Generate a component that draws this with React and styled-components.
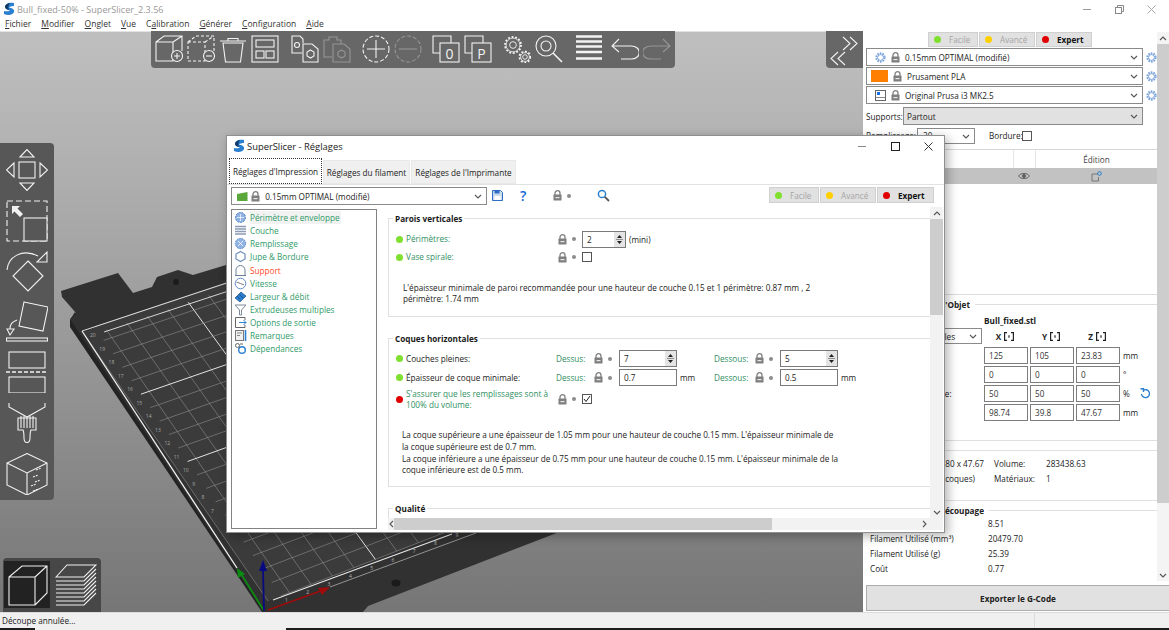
import React from 'react';
import styled, { createGlobalStyle } from 'styled-components';

const GlobalStyle = createGlobalStyle`
  html, body {
    margin: 0;
    padding: 0;
    background: #fff;
    font-family: "Open Sans", "Noto Sans", sans-serif;
    font-size: 8.2px;
    color: #222;
  }
  * { box-sizing: border-box; }
`;

const AppWindow = styled.div`
  position: relative;
  width: 1169px;
  height: 630px;
  display: flex;
  flex-direction: column;
  overflow: hidden;
  background: #fff;
`;

const TitleBar = styled.div`
  height: 16px;
  display: flex;
  align-items: center;
  padding: 2px 0 0 3px;
  gap: 1px;
  color: #999;
  font-size: 9.1px;
`;

const WinButtons = styled.div`
  margin-left: auto;
  margin-right: 13px;
  display: flex;
  align-items: center;
  gap: 23px;
`;

const MenuBar = styled.div`
  height: 15px;
  display: flex;
  align-items: center;
  gap: 10px;
  padding-left: 5px;
  font-size: 8.5px;
  color: #333;
`;

const Body = styled.div`
  flex: 1;
  display: flex;
  min-height: 0;
`;

const Canvas = styled.div`
  position: relative;
  flex: 1;
  background: linear-gradient(#bfbfbf, #b2b2b2 20%, #767676);
  border-top: 1px solid #e2e2e2;
`;

const BedSvg = styled.svg`
  position: absolute;
  left: 0;
  top: -1px;
`;

const TopTools = styled.div`
  position: absolute;
  left: 151px;
  top: -1px;
  width: 524px;
  height: 37px;
  padding: 4px 0 0 4px;
  display: flex;
  gap: 4px;
  background: #676767;
  border-radius: 0 0 4px 4px;
`;

const CollapseBox = styled.div`
  position: absolute;
  right: 0;
  top: -1px;
  width: 37px;
  height: 37px;
  background: #676767;
  border-radius: 0 0 0 4px;
`;

const LeftTools = styled.div`
  position: absolute;
  left: 0;
  top: 111px;
  width: 54px;
  height: 357px;
  padding: 6px 0 0 6px;
  display: flex;
  flex-direction: column;
  gap: 8.6px;
  background: #575757;
  border-radius: 0 4px 4px 0;
`;

const ViewPanel = styled.div`
  position: absolute;
  left: 3px;
  bottom: 0;
  width: 98px;
  height: 54px;
  padding: 3px 0 0 1px;
  display: flex;
  gap: 3px;
  background: #474747;
  border-radius: 4px 4px 0 0;
`;

const ViewCell = styled.div`
  width: 46px;
  height: 47px;
  display: flex;
  align-items: center;
  justify-content: center;
  background: ${(p) => (p.$active ? '#222' : 'transparent')};
`;

const Tool = styled.svg`
  flex: none;
  fill: none;
  stroke: #fff;
  stroke-width: 1.1;
  opacity: ${(p) => (p.$off ? 0.3 : 0.92)};
  margin-left: ${(p) => p.$sep || 0}px;
`;

/* right panel */
const Sidebar = styled.div`
  width: 306px;
  display: flex;
  flex-direction: column;
  background: #fff;
`;

const SideMain = styled.div`
  flex: 1;
  display: flex;
  min-height: 0;
`;

const SideContent = styled.div`
  flex: 1;
  min-width: 0;
  display: flex;
  flex-direction: column;
  & > * {
    flex: none;
  }
`;

const SideModes = styled.div`
  display: flex;
  gap: 1px;
  padding: 1px 0 0 65px;
  height: 17px;
`;

const ModeBtn = styled.div`
  width: ${(p) => p.$w}px;
  height: ${(p) => p.$h || 15}px;
  display: flex;
  align-items: center;
  gap: 8px;
  padding-left: 5px;
  background: #e1e1e1;
  border: 1px solid #d0d0d0;
  color: ${(p) => (p.$active ? '#111' : '#a5a5a5')};
  font-weight: ${(p) => (p.$active ? 700 : 400)};
`;

const Dot = styled.span`
  flex: none;
  width: 7px;
  height: 7px;
  border-radius: 50%;
  background: ${(p) => p.$color};
`;

const PresetList = styled.div`
  display: flex;
  flex-direction: column;
  gap: 1px;
  padding-left: 3px;
`;

const PresetRow = styled.div`
  display: flex;
  align-items: center;
  gap: 3px;
`;

const Combo = styled.div`
  position: relative;
  width: ${(p) => p.$w}px;
  height: ${(p) => p.$h || 18}px;
  flex: none;
  display: flex;
  align-items: center;
  gap: ${(p) => p.$gap || 5}px;
  padding-left: ${(p) => p.$pad || 8}px;
  margin-left: ${(p) => p.$left || 0}px;
  background: ${(p) => p.$bg || '#fff'};
  border: 1px solid #8a8a8a;
  overflow: hidden;
  white-space: nowrap;
`;

const ChevronBox = styled.span`
  position: absolute;
  right: 4px;
  top: 50%;
  margin-top: -2px;
  display: flex;
`;

const OptionsRow = styled.div`
  display: flex;
  align-items: center;
  height: ${(p) => p.$h}px;
  margin-top: ${(p) => p.$top || 0}px;
  padding-left: 3px;
`;

const OptLabel = styled.span`
  width: ${(p) => p.$w}px;
  margin-left: ${(p) => p.$left || 0}px;
  flex: none;
  white-space: nowrap;
`;

const Swatch = styled.span`
  width: 17px;
  height: 12px;
  margin-left: -4px;
  background: #ff8000;
`;

const CheckBox = styled.span`
  display: flex;
  align-items: center;
  justify-content: center;
  flex: none;
  width: 10px;
  height: 10px;
  border: 1px solid #555;
  background: #fff;
`;

const ObjectList = styled.div`
  height: 146px;
  margin-top: 5px;
  border-top: 1px solid #d8d8d8;
  border-bottom: 1px solid #dcdcdc;
`;

const ListHead = styled.div`
  display: grid;
  grid-template-columns: 150px 22px 1fr;
  height: 18px;
  color: #444;
`;

const HeadCell = styled.div`
  display: flex;
  align-items: center;
  justify-content: ${(p) => (p.$start ? 'flex-start' : 'center')};
  padding-left: ${(p) => (p.$start ? 4 : 0)}px;
  border-left: ${(p) => (p.$line ? '1px solid #e6e6e6' : 'none')};
`;

const ListRow = styled(ListHead)`
  height: 16px;
  background: #c2c2c2;
`;

const LegendLine = styled.div`
  display: flex;
  align-items: center;
  gap: 5px;
  height: ${(p) => p.$h}px;
  font-weight: 700;
  white-space: nowrap;
  &::after {
    content: '';
    flex: 1;
    height: 1px;
    background: #dfdfdf;
  }
`;

const LegendText = styled.span`
  width: ${(p) => p.$w}px;
  flex: none;
  display: flex;
  justify-content: flex-end;
  overflow: hidden;
`;

const ObjectGrid = styled.div`
  display: grid;
  grid-template-columns: 119px 44px 44px 44px 33px;
  grid-template-rows: 12px repeat(5, 17px);
  column-gap: 2px;
  row-gap: 2px;
`;

const FileName = styled.div`
  grid-column: 2 / 5;
  font-weight: 700;
  display: flex;
  align-items: center;
`;

const AxisHead = styled.div`
  display: flex;
  align-items: center;
  justify-content: center;
  gap: 3px;
  padding-right: 2px;
  font-weight: 700;
`;

const NumBox = styled.div`
  border: 1px solid #7d7d7d;
  display: flex;
  align-items: center;
  padding-left: 4px;
  color: #333;
`;

const GridLabel = styled.div`
  display: flex;
  align-items: center;
  padding-left: 22px;
  white-space: nowrap;
`;

const UnitCell = styled.div`
  position: relative;
  display: flex;
  align-items: center;
  padding-left: 1px;
`;

const ResetIcon = styled.svg`
  position: absolute;
  left: 18px;
  top: 3px;
`;

const Rule = styled.div`
  height: 1px;
  margin-top: ${(p) => p.$top}px;
  background: #e0e0e0;
`;

const InfoGrid = styled.div`
  display: grid;
  grid-template-columns: 131px 52px 1fr;
  grid-auto-rows: 15px;
  margin-top: 5px;
  align-items: center;
`;

const InfoLeft = styled.div`
  white-space: nowrap;
  overflow: hidden;
  display: flex;
  justify-content: flex-end;
  padding-right: ${(p) => p.$right}px;
`;

const SliceGrid = styled.div`
  display: grid;
  grid-template-columns: 118px 1fr;
  grid-auto-rows: 15px;
  padding-left: 7px;
  margin-top: -3px;
  align-items: center;
`;

const SideScroll = styled.div`
  width: 12px;
  margin: 1px 0 4px;
  display: flex;
  flex-direction: column;
  background: #f4f4f4;
`;

const ScrollCap = styled.div`
  flex: none;
  display: flex;
  align-items: center;
  justify-content: center;
  height: ${(p) => p.$size || 12}px;
  width: ${(p) => p.$wide || 'auto'};
`;

const ScrollThumb = styled.div`
  flex: none;
  height: ${(p) => p.$h}px;
  background: #cdcdcd;
`;

const ExportBtn = styled.div`
  height: 26px;
  margin: 0 0 1px 3px;
  display: flex;
  align-items: center;
  justify-content: center;
  font-weight: 700;
  background: #e1e1e1;
  border: 1px solid #adadad;
  border-right: none;
`;

const StatusBar = styled.div`
  height: 18px;
  position: relative;
  display: flex;
  align-items: center;
  padding: 0 0 2px 2px;
  background: #f0f0f0;
  border-top: 1px solid #dcdcdc;
`;

const TaskEdge = styled.div`
  position: absolute;
  bottom: 0;
  left: ${(p) => p.$left}px;
  right: ${(p) => p.$right}px;
  height: 2px;
  background: #1c1c1c;
`;

const StatusDivider = styled.div`
  position: absolute;
  left: 1034px;
  top: 0;
  bottom: 2px;
  width: 1px;
  background: #dcdcdc;
`;

/* settings dialog */
const Dialog = styled.div`
  position: absolute;
  left: 226px;
  top: 135px;
  width: 719px;
  height: 398px;
  display: flex;
  flex-direction: column;
  background: #fff;
  border: 1px solid #8f8f8f;
  box-shadow: 3px 3px 10px rgba(0, 0, 0, 0.3);
`;

const DialogTitle = styled.div`
  height: 21px;
  flex: none;
  display: flex;
  align-items: center;
  gap: 1px;
  padding: 0 0 1px 6px;
  font-size: 9.4px;
`;

const DialogWin = styled.div`
  margin-left: auto;
  margin-right: 11px;
  display: flex;
  align-items: center;
  gap: 24px;
`;

const TabRow = styled.div`
  height: 27px;
  flex: none;
  display: flex;
  align-items: flex-end;
  gap: 1px;
  padding-left: 2px;
`;

const Tab = styled.div`
  width: ${(p) => p.$w}px;
  height: ${(p) => (p.$active ? 26 : 24)}px;
  display: flex;
  align-items: center;
  justify-content: center;
  white-space: nowrap;
  background: ${(p) => (p.$active ? '#fff' : '#f0f0f0')};
  border: ${(p) => (p.$active ? '1px dotted #333' : '1px solid #e8e8e8')};
`;

const TabPanel = styled.div`
  flex: 1;
  min-height: 0;
  display: flex;
  flex-direction: column;
  padding-left: 4px;
  border-top: 1px solid #e2e2e2;
`;

const PresetBar = styled.div`
  height: 22px;
  flex: none;
  display: flex;
  align-items: flex-start;
  padding-top: 2px;
`;

const BarItem = styled.span`
  display: flex;
  align-items: center;
  height: 17px;
  margin-left: ${(p) => p.$left}px;
`;

const HelpMark = styled.span`
  color: #1565d8;
  font-size: 14px;
  font-weight: 600;
  line-height: 17px;
`;

const BarModes = styled.div`
  display: flex;
  gap: 1px;
  margin-left: auto;
  margin-right: 10px;
`;

const Split = styled.div`
  flex: 1;
  min-height: 0;
  display: flex;
  gap: 11px;
`;

const Tree = styled.div`
  width: 146px;
  height: 320px;
  margin-top: 2px;
  flex: none;
  padding: 1px 0 0 2px;
  border: 1px solid #828282;
`;

const TreeRow = styled.div`
  display: flex;
  align-items: center;
  gap: 3px;
  height: 13.15px;
  white-space: nowrap;
  color: ${(p) => (p.$red ? '#ff4b1f' : '#2f9a68')};
`;

const TreeIcon = styled.svg`
  flex: none;
`;

const TreeText = styled.span`
  height: 13px;
  line-height: 13px;
  padding-right: 1px;
  background: ${(p) => (p.$active ? '#f2f2f2' : 'transparent')};
`;

const Page = styled.div`
  width: 555px;
  display: grid;
  grid-template-columns: 542px 13px;
  grid-template-rows: 311px 12px;
`;

const PageScroll = styled.div`
  overflow: hidden;
  padding-top: 4px;
`;

const Section = styled.fieldset`
  margin: 0 0 14px;
  padding: 0;
  height: ${(p) => p.$h}px;
  min-width: 0;
  border: 1px solid #e0e0e0;
  border-right: none;
`;

const SectionTitle = styled.legend`
  margin-left: 4px;
  padding: 2px 2px 0;
  font-weight: 700;
  line-height: 12px;
  color: #1a1a1a;
`;

const FormRow = styled.div`
  display: flex;
  align-items: center;
  height: ${(p) => p.$h || 18}px;
  margin-top: ${(p) => p.$top || 0}px;
  padding-left: 7px;
`;

const RowLabel = styled.span`
  flex: none;
  width: ${(p) => p.$w || 155}px;
  padding-left: 3px;
  line-height: 11.5px;
  color: ${(p) => (p.$green ? '#2f8f5f' : '#222')};
`;

const SideTag = styled.span`
  flex: none;
  width: ${(p) => p.$w}px;
  color: #2f8f5f;
`;

const LockGroup = styled.span`
  flex: none;
  width: ${(p) => p.$w || 24}px;
  display: flex;
  align-items: center;
  gap: 5px;
`;

const Bullet = styled.span`
  width: 4px;
  height: 4px;
  border-radius: 50%;
  background: #8c8c8c;
`;

const TextBox = styled.div`
  position: relative;
  flex: none;
  width: ${(p) => p.$w}px;
  height: 17px;
  display: flex;
  align-items: center;
  padding-left: 4px;
  background: #fff;
  border: 1px solid #7a7a7a;
`;

const Spinner = styled.span`
  position: absolute;
  right: 0;
  top: 0;
  bottom: 0;
  width: 11px;
  background: #e4e4e4;
  display: flex;
  align-items: center;
  justify-content: center;
`;

const Unit = styled.span`
  flex: none;
  width: ${(p) => p.$w}px;
  padding-left: 3px;
`;

const NoteText = styled.div`
  margin-top: ${(p) => p.$top}px;
  padding-left: ${(p) => p.$left}px;
  width: ${(p) => p.$width}px;
  line-height: ${(p) => p.$lh}px;
  color: #222;
`;

const VBar = styled.div`
  display: flex;
  flex-direction: column;
  background: #f2f2f2;
`;

const HBar = styled.div`
  display: flex;
  align-items: stretch;
  background: #f2f2f2;
`;

const HThumb = styled.div`
  width: ${(p) => p.$w}px;
  background: #cdcdcd;
`;

const BarGap = styled.div`
  flex: 1;
`;

const Corner = styled.div`
  background: #f2f2f2;
`;

const Chevron = ({ dir = 'down', color = '#555' }) => {
  const paths = {
    down: 'M1 1 L4 4 L7 1',
    up: 'M1 4 L4 1 L7 4',
    left: 'M5 1 L2 4 L5 7',
    right: 'M2 1 L5 4 L2 7',
  };
  const wide = dir === 'down' || dir === 'up';
  return (
    <svg width={wide ? 8 : 7} height={wide ? 5 : 8} fill="none" stroke={color} strokeWidth="1.1">
      <path d={paths[dir]} />
    </svg>
  );
};

const Lock = () => (
  <svg width="9" height="11" viewBox="0 0 9 11">
    <path d="M2 5V3.2a2.5 2.5 0 0 1 5 0V5" fill="none" stroke="#7f7f7f" strokeWidth="1.3" />
    <rect x="0.5" y="4.6" width="8" height="6" rx="0.6" fill="#7f7f7f" />
    <rect x="2.5" y="7" width="4" height="1.2" fill="#e8e8e8" />
  </svg>
);

const BlueGear = ({ size = 11 }) => (
  <svg width={size} height={size} viewBox="0 0 12 12" fill="none">
    <circle cx="6" cy="6" r="4.6" stroke="#7aa3dc" strokeWidth="2" strokeDasharray="1.8 1.1" />
    <circle cx="6" cy="6" r="3.2" stroke="#6f97d2" strokeWidth="1" />
    <circle cx="6" cy="6" r="2" fill="#fff" />
  </svg>
);

const Logo = () => (
  <svg width="13" height="14" viewBox="0 0 13 14">
    <path d="M11 1 C6 0 2 2 2 5 C2 7 5 8 7 8.5 C5 9.5 3 9.5 1 9 L1 12 C5 14 10 13 11 10 C12 7 8 6 6 5.5 C7 4.5 9 4 11 4 Z" fill="#2a7fd0" />
    <path d="M7 1 C4 1.5 2 3 2 5 C2 6.5 4 7.5 6 8 C5 6 5 3 7 1 Z" fill="#123a63" />
  </svg>
);

const WinMin = ({ color = '#888' }) => (
  <svg width="9" height="9" stroke={color} fill="none"><path d="M0 4.5H8" /></svg>
);
const WinMax = ({ color = '#222' }) => (
  <svg width="9" height="9" stroke={color} fill="none"><rect x="0.5" y="0.5" width="8" height="8" /></svg>
);
const WinRestore = () => (
  <svg width="9" height="9" stroke="#888" fill="none">
    <rect x="0.5" y="2.5" width="6" height="6" />
    <path d="M2.5 2.5V0.5H8.5V6.5H6.5" />
  </svg>
);
const WinClose = ({ color = '#333' }) => (
  <svg width="9" height="9" stroke={color} fill="none"><path d="M0.5 0.5L8.5 8.5M8.5 0.5L0.5 8.5" /></svg>
);

const SpinArrows = () => (
  <svg width="7" height="13" viewBox="0 0 7 13">
    <path d="M3.5 2 L6 5 H1 Z M1 8 H6 L3.5 11 Z" fill="#222" />
    <path d="M0 6.5 H7" stroke="#777" strokeWidth="0.8" />
  </svg>
);

const Eye = () => (
  <svg width="12" height="8" viewBox="0 0 12 8" fill="none" stroke="#666" strokeWidth="1">
    <path d="M0.5 4 C3 0.5 9 0.5 11.5 4 C9 7.5 3 7.5 0.5 4Z" />
    <circle cx="6" cy="4" r="1.7" fill="#666" />
  </svg>
);

const EditMark = () => (
  <svg width="11" height="11" viewBox="0 0 11 11" fill="none">
    <path d="M7 3H1V10H7.5V6" stroke="#777" />
    <circle cx="8.5" cy="2.5" r="1.8" stroke="#2a7fd0" />
  </svg>
);

const BracketMark = () => (
  <svg width="10" height="9" viewBox="0 0 10 9" fill="none" stroke="#222" strokeWidth="1.2">
    <path d="M3 0.6H0.6V8.4H3M7 0.6H9.4V8.4H7" />
    <path d="M5 3.2V5.8" />
  </svg>
);

const Cube = ({ dashed }) => (
  <path d="M1 7H18V26H1Z M1 7L9 1H27V16 M18 7L27 1" strokeDasharray={dashed ? '3 2' : undefined} />
);

const GearShape = ({ cx, cy, r }) => (
  <>
    <circle cx={cx} cy={cy} r={r} strokeWidth="1.8" strokeDasharray="1.9 1.7" />
    <circle cx={cx} cy={cy} r={r - 1.1} strokeWidth="0.8" />
    <circle cx={cx} cy={cy} r={r * 0.42} strokeWidth="0.9" />
  </>
);

const tools = [
  { key: 'add', body: <><Cube /><circle cx="22" cy="21" r="5.5" fill="#676767" /><path d="M19 21H25M22 18V24" /></> },
  { key: 'remove', body: <><Cube dashed /><circle cx="22" cy="21" r="5.5" fill="#676767" /><path d="M19 21H25" /></> },
  { key: 'trash', body: <path d="M1 6H27 M9 6V3.5H19V6 M4 8L6.5 27H21.5L24 8Z" /> },
  { key: 'arrange', body: <><rect x="1" y="1" width="26" height="26" /><rect x="5" y="5" width="18" height="7" /><rect x="5" y="16" width="8" height="7" /><rect x="15" y="16" width="8" height="7" /></> },
  { key: 'copy', sep: 8, body: <><path d="M11 18H1V1H9L12 4V8" /><circle cx="6" cy="10" r="2.5" /><path d="M12 9H21L27 14V27H12Z" /><path d="M19.5 15L23 17V21L19.5 23L16 21V17Z" /></> },
  { key: 'paste', off: true, body: <><path d="M9 22H1V5H6V2H14V5H18V9" /><path d="M10 9H21L27 14V27H10Z" /><path d="M18.5 15L22 17V21L18.5 23L15 21V17Z" /></> },
  { key: 'plus', sep: 7, body: <><circle cx="14" cy="14" r="13" strokeDasharray="4 2" /><path d="M5 14H23M14 5V23" /></> },
  { key: 'minus', off: true, body: <><circle cx="14" cy="14" r="13" strokeDasharray="4 2" /><path d="M5 14H23" /></> },
  { key: 'inst0', sep: 6, body: <><path d="M8 18H1V1H19V8" /><rect x="8" y="8" width="19" height="19" /><text x="17.5" y="23.5" textAnchor="middle" fontSize="14" fontFamily="Open Sans, sans-serif" fill="#fff" stroke="none">0</text></> },
  { key: 'instP', body: <><path d="M8 18H1V1H19V8" /><rect x="8" y="8" width="19" height="19" /><text x="17.5" y="23.5" textAnchor="middle" fontSize="14" fontFamily="Open Sans, sans-serif" fill="#fff" stroke="none">P</text></> },
  { key: 'gears', sep: 7, body: <><GearShape cx={10} cy={10} r={8} /><GearShape cx={22} cy={22} r={5.5} /></> },
  { key: 'search', body: <><circle cx="11" cy="11" r="10" /><circle cx="11" cy="11" r="5" /><path d="M18 18L27 27" strokeWidth="1.6" /></> },
  { key: 'slice', sep: 8, body: <path d="M1 1.5H27M1 6.5H27M1 11.5H27M1 17H27M1 23.5H27" strokeWidth="2.4" /> },
  { key: 'undo', sep: 4, body: <path d="M8 4L1 11L8 17M1 11H20C31 11 31 24 20 24H10" /> },
  { key: 'redo', off: true, body: <path d="M20 4L27 11L20 17M27 11H8C-3 11 -3 24 8 24H18" /> },
];

const leftTools = [
  <>
    <rect x="13" y="13" width="16" height="16" />
    <path d="M14 8L21 0.5L28 8Z M14 34L21 41.5L28 34Z M8 14L0.5 21L8 28Z M34 14L41.5 21L34 28Z" />
  </>,
  <>
    <rect x="1" y="1" width="40" height="40" strokeDasharray="6 3" />
    <rect x="18" y="18" width="23" height="23" fill="#575757" />
    <path d="M6 6H14L11.5 8.5L17 14L14 17L8.5 11.5L6 14Z" fill="#fff" stroke="none" />
  </>,
  <>
    <path d="M22 11L37 26L22 41L7 26Z" />
    <path d="M1 20C2 7 16 -2 32 6" />
    <path d="M41 2L41 12L31 12Z" />
  </>,
  <>
    <path d="M18 1L42 6L37 30L13 25Z" />
    <rect x="0.5" y="37" width="41" height="3" />
    <path d="M11 19C6 21 4 23 4 28 M1 28H8L4 34Z" />
  </>,
  <>
    <rect x="3" y="1" width="36" height="16" />
    <path d="M0 21H42" strokeDasharray="4 2" strokeWidth="1.3" />
    <rect x="3" y="26" width="36" height="16" />
  </>,
  <>
    <path d="M3 1V5L21 15L39 5V1" />
    <path d="M12 16H30V28H25C24 30 24 33 24 36C24 42 18 42 18 36C18 33 18 30 17 28H12Z" />
    <path d="M15 14V26M18 14V26M21 15V26M24 14V26M27 14V26" />
  </>,
  <>
    <path d="M21 0.5L41 10V32L21 42L1 32V10Z" />
    <path d="M1 10L21 20L41 10 M21 20V42" />
    <path d="M30 17L35 15M27 24L32 22M29 29L34 27M25 33L30 31M27 38L32 36" strokeDasharray="2 1" />
  </>,
];

const P00 = [82, 331];
const P10 = [594, 161];
const P01 = [268, 601];
const P11 = [805, 393];
const bedPoint = (u, v) => {
  const a = u / 25;
  const b = v / 20;
  return [
    P00[0] * (1 - a) * (1 - b) + P10[0] * a * (1 - b) + P01[0] * (1 - a) * b + P11[0] * a * b,
    P00[1] * (1 - a) * (1 - b) + P10[1] * a * (1 - b) + P01[1] * (1 - a) * b + P11[1] * a * b,
  ];
};

const seq = (n) => Array.from({ length: n }, (_, i) => i);

const BedLine = ({ from, to, major }) => (
  <line
    x1={from[0]}
    y1={from[1]}
    x2={to[0]}
    y2={to[1]}
    stroke={major ? '#e4e4e4' : '#8f8f8f'}
    strokeWidth={major ? 1 : 0.6}
  />
);

const Bed = () => (
  <BedSvg width="863" height="581" viewBox="0 31 863 581">
    <path d="M70 320L70 327L262 612H275L75 312Z" fill="#232323" />
    <path d="M61 291L118 273L133 293L152 287L157 277L178 270L193 275L226 265L620 140H800V430L554 534L368 606L363 612H264L72 322L70 319L76 313L62 297Z" fill="#313131" />
    <path d="M82 331L594 161L805 393L268 601Z" fill="#3b3b3b" />
    <ellipse cx="176" cy="282" rx="3" ry="3" fill="#1b1b1b" />
    <ellipse cx="396" cy="583" rx="4.5" ry="3.5" fill="#1b1b1b" />
    {seq(26).map((u) => (
      <BedLine key={`u${u}`} from={bedPoint(u, 0.4)} to={bedPoint(u, 20)} major={u % 5 === 0 && u > 0} />
    ))}
    {seq(21).map((v) => (
      <BedLine key={`v${v}`} from={bedPoint(0.6, v)} to={bedPoint(25, v)} major={v % 5 === 0 && v > 0 && v < 20} />
    ))}
    <path d="M82 331L594 161M104 332L450 218" stroke="#e8e8e8" strokeWidth="0.9" fill="none" />
    <path d="M82 331L237 568" stroke="#f2f2f2" strokeWidth="1.3" />
    <path d="M273 600L452 534" stroke="#e8e8e8" strokeWidth="1.1" />
    <path d="M330 587L476 533" stroke="#bdbdbd" strokeWidth="0.7" />
    {seq(14).map((i) => {
      const p = bedPoint(0, i);
      return (
        <text key={i} x={p[0] + 8} y={p[1] + 6} fontSize="5" fill="#a8a8a8" fontFamily="Open Sans, sans-serif">
          {20 - i}
        </text>
      );
    })}
    {seq(9).map((i) => (
      <text key={i} x={285 + i * 21.3} y={602 - i * 8.1} fontSize="5" fill="#b4b4b4" fontFamily="Open Sans, sans-serif">
        {i + 1}
      </text>
    ))}
    <path d="M268 610L326 589" stroke="#a00b0b" strokeWidth="1.6" />
    <path d="M330 587L318 588L322 595Z" fill="#a00b0b" />
    <path d="M264 611L240 572" stroke="#0c8a12" strokeWidth="1.8" />
    <path d="M237 568L238 578L245 574Z" fill="#0c8a12" />
    <path d="M264 611L263 570" stroke="#0a0a80" strokeWidth="1.8" />
    <path d="M263 560L259 571H267Z" fill="#0a0a80" />
  </BedSvg>
);

const treeItems = [
  { label: 'Périmètre et enveloppe', icon: <><circle cx="6.5" cy="6.5" r="5" fill="#8fb3e3" stroke="#4c7fc4" strokeDasharray="2 1" /><path d="M3 6.5H10M6.5 3V10" stroke="#fff" strokeWidth="0.7" /></> },
  { label: 'Couche', icon: <path d="M1 2.5H12M1 5H12M1 7.5H12M1 10H12" stroke="#8b9bb4" strokeWidth="1.7" /> },
  { label: 'Remplissage', icon: <><circle cx="6.5" cy="6.5" r="5.2" fill="#8fb3e3" stroke="#5f8ccb" strokeDasharray="1.5 1" /><path d="M4 4L9 9M9 4L4 9" stroke="#fff" strokeWidth="0.8" /></> },
  { label: 'Jupe & Bordure', icon: <path d="M6.5 1.5L11 4V9L6.5 11.5L2 9V4Z" fill="none" stroke="#6c8db9" strokeWidth="1.2" /> },
  { label: 'Support', red: true, icon: <path d="M2 11.5V6A4.5 4.5 0 0 1 11 6V11.5M1 11.5H12" fill="none" stroke="#6c7f9a" strokeWidth="1" /> },
  { label: 'Vitesse', icon: <><circle cx="6.5" cy="6.5" r="5.3" fill="none" stroke="#5f8ccb" /><path d="M6.5 6.5L2.5 5M6.5 6.5L10 8" stroke="#777" /></> },
  { label: 'Largeur & débit', icon: <path d="M1 8L7 2L12 6L6 12Z M3 6L6 9M5 4L9 8" fill="#2a7fd0" stroke="#123a63" strokeWidth="0.6" /> },
  { label: 'Extrudeuses multiples', icon: <path d="M1 2H12L7.5 7V12H5.5V7Z" fill="none" stroke="#7d8896" /> },
  { label: 'Options de sortie', icon: <><path d="M11 4V1.5H1.5V11.5H11V9" fill="none" stroke="#666" /><path d="M5 6.5H12M9.5 4L12 6.5L9.5 9" fill="none" stroke="#2a7fd0" /></> },
  { label: 'Remarques', icon: <><rect x="1.5" y="1.5" width="8" height="10" fill="#f0f0f0" stroke="#777" /><path d="M3 4H8M3 6.5H6" stroke="#888" /><path d="M11.5 1V12" stroke="#2a7fd0" strokeWidth="1.6" /></> },
  { label: 'Dépendances', icon: <><circle cx="3.5" cy="3.5" r="2" fill="none" stroke="#666" /><circle cx="8" cy="8" r="3.3" fill="none" stroke="#2a7fd0" strokeWidth="1.4" /><path d="M5 5L6 6M6 2H9" stroke="#666" /></> },
];

const LockBit = ({ w }) => (
  <LockGroup $w={w}>
    <Lock />
    <Bullet />
  </LockGroup>
);

const SpinBox = ({ w, value }) => (
  <TextBox $w={w}>
    {value}
    <Spinner>
      <SpinArrows />
    </Spinner>
  </TextBox>
);

const objectRows = [
  { label: 'Position:', values: ['125', '105', '23.83'], unit: 'mm' },
  { label: 'Rotation:', values: ['0', '0', '0'], unit: '°' },
  { label: "Facteur d'échelle:", values: ['50', '50', '50'], unit: '%', reset: true },
  { label: 'Taille:', values: ['98.74', '39.8', '47.67'], unit: 'mm' },
];

const sliceRows = [
  ['Filament Utilisé (m)', '8.51'],
  ['Filament Utilisé (mm³)', '20479.70'],
  ['Filament Utilisé (g)', '25.39'],
  ['Coût', '0.77'],
];

const SettingsDialog = () => (
  <Dialog>
    <DialogTitle>
      <Logo />
      SuperSlicer - Réglages
      <DialogWin>
        <WinMin />
        <WinMax />
        <WinClose />
      </DialogWin>
    </DialogTitle>
    <TabRow>
      <Tab $w={93} $active>Réglages d'Impression</Tab>
      <Tab $w={87}>Réglages du filament</Tab>
      <Tab $w={105}>Réglages de l'Imprimante</Tab>
    </TabRow>
    <TabPanel>
      <PresetBar>
        <Combo $w={256} $h={18} $pad={5} $gap={3}>
          <svg width="11" height="9" viewBox="0 0 11 9"><path d="M0 2L10.5 0V9H0Z" fill="#5aa83c" /></svg>
          <Lock />
          <span>&nbsp;0.15mm OPTIMAL (modifié)</span>
          <ChevronBox><Chevron /></ChevronBox>
        </Combo>
        <BarItem $left={5}>
          <svg width="11" height="11" viewBox="0 0 11 11">
            <path d="M0.5 0.5H8.5L10.5 2.5V10.5H0.5Z" fill="#cfdcee" stroke="#2a6fc4" />
            <rect x="2.5" y="0.5" width="5" height="3" fill="#2a6fc4" />
            <rect x="2.5" y="6" width="6" height="4" fill="#fff" />
          </svg>
        </BarItem>
        <BarItem $left={17}><HelpMark>?</HelpMark></BarItem>
        <BarItem $left={27}>
          <LockBit />
        </BarItem>
        <BarItem $left={20}>
          <svg width="13" height="13" viewBox="0 0 13 13" fill="none">
            <circle cx="5" cy="5" r="3.6" stroke="#2a7fd0" strokeWidth="1.5" />
            <path d="M7.8 7.8L12 12" stroke="#555" strokeWidth="1.8" />
          </svg>
        </BarItem>
        <BarModes>
          <ModeBtn $w={50} $h={16}><Dot $color="#80e030" />Facile</ModeBtn>
          <ModeBtn $w={56} $h={16}><Dot $color="#ffd000" />Avancé</ModeBtn>
          <ModeBtn $w={57} $h={16} $active><Dot $color="#e00000" />Expert</ModeBtn>
        </BarModes>
      </PresetBar>
      <Split>
        <Tree>
          {treeItems.map((item, i) => (
            <TreeRow key={item.label} $red={item.red}>
              <TreeIcon width="13" height="13" viewBox="0 0 13 13">{item.icon}</TreeIcon>
              <TreeText $active={i === 0}>{item.label}</TreeText>
            </TreeRow>
          ))}
        </Tree>
        <Page>
          <PageScroll>
            <Section $h={106}>
              <SectionTitle>Parois verticales</SectionTitle>
              <FormRow $top={5}>
                <Dot $color="#80e030" />
                <RowLabel $green>Périmètres:</RowLabel>
                <LockBit />
                <SpinBox w={44} value="2" />
                <Unit $w={40}>(mini)</Unit>
              </FormRow>
              <FormRow>
                <Dot $color="#80e030" />
                <RowLabel $green>Vase spirale:</RowLabel>
                <LockBit />
                <CheckBox />
              </FormRow>
              <NoteText $top={16} $left={14} $width={440} $lh={11}>
                L'épaisseur minimale de paroi recommandée pour une hauteur de couche 0.15 et 1 périmètre: 0.87 mm , 2 périmètre: 1.74 mm
              </NoteText>
            </Section>
            <Section $h={156}>
              <SectionTitle>Coques horizontales</SectionTitle>
              <FormRow $h={19} $top={4}>
                <Dot $color="#80e030" />
                <RowLabel $w={153}>Couches pleines:</RowLabel>
                <SideTag $w={38}>Dessus:</SideTag>
                <LockBit w={25} />
                <SpinBox w={58} value="7" />
                <Unit $w={37} />
                <SideTag $w={41}>Dessous:</SideTag>
                <LockBit w={25} />
                <SpinBox w={58} value="5" />
              </FormRow>
              <FormRow $h={19}>
                <Dot $color="#80e030" />
                <RowLabel $w={153}>Épaisseur de coque minimale:</RowLabel>
                <SideTag $w={38}>Dessus:</SideTag>
                <LockBit w={25} />
                <TextBox $w={58}>0.7</TextBox>
                <Unit $w={37}>mm</Unit>
                <SideTag $w={41}>Dessous:</SideTag>
                <LockBit w={25} />
                <TextBox $w={58}>0.5</TextBox>
                <Unit $w={30}>mm</Unit>
              </FormRow>
              <FormRow $h={24}>
                <Dot $color="#e00000" />
                <RowLabel $green>S'assurer que les remplissages sont à 100% du volume:</RowLabel>
                <LockBit />
                <CheckBox>
                  <svg width="8" height="8" viewBox="0 0 8 8" fill="none" stroke="#222"><path d="M1 4L3 6.5L7 1" /></svg>
                </CheckBox>
              </FormRow>
              <NoteText $top={18} $left={13} $width={451} $lh={11.8}>
                La coque supérieure a une épaisseur de 1.05 mm pour une hauteur de couche 0.15 mm. L'épaisseur minimale de la coque supérieure est de 0.7 mm.<br />
                La coque inférieure a une épaisseur de 0.75 mm pour une hauteur de couche 0.15 mm. L'épaisseur minimale de la coque inférieure est de 0.5 mm.
              </NoteText>
            </Section>
            <Section $h={60}>
              <SectionTitle>Qualité</SectionTitle>
            </Section>
          </PageScroll>
          <VBar>
            <ScrollCap><Chevron dir="up" /></ScrollCap>
            <ScrollThumb $h={96} />
            <BarGap />
            <ScrollCap><Chevron /></ScrollCap>
          </VBar>
          <HBar>
            <ScrollCap $wide="6px"><Chevron dir="left" /></ScrollCap>
            <HThumb $w={378} />
            <BarGap />
            <ScrollCap $wide="12px"><Chevron dir="right" /></ScrollCap>
          </HBar>
          <Corner />
        </Page>
      </Split>
    </TabPanel>
  </Dialog>
);

const App = () => (
  <AppWindow>
    <GlobalStyle />
    <TitleBar>
      <Logo />
      Bull_fixed-50% - SuperSlicer_2.3.56
      <WinButtons>
        <WinMin color="#999" />
        <WinRestore />
        <WinClose color="#aaa" />
      </WinButtons>
    </TitleBar>
    <MenuBar>
      <span><u>F</u>ichier</span>
      <span><u>M</u>odifier</span>
      <span><u>O</u>nglet</span>
      <span><u>V</u>ue</span>
      <span>C<u>a</u>libration</span>
      <span><u>G</u>énérer</span>
      <span><u>C</u>onfiguration</span>
      <span><u>A</u>ide</span>
    </MenuBar>
    <Body>
      <Canvas>
        <Bed />
        <TopTools>
          {tools.map((t) => (
            <Tool key={t.key} width="28" height="28" viewBox="0 0 28 28" $off={t.off} $sep={t.sep}>
              {t.body}
            </Tool>
          ))}
        </TopTools>
        <CollapseBox>
          <Tool width="37" height="37" viewBox="0 0 37 37" strokeWidth="1.3">
            <path d="M17 6L24 12.5L17 19M24 6L31 12.5L24 19M12 21L5 27.5L12 34M19 21L12 27.5L19 34" />
          </Tool>
        </CollapseBox>
        <LeftTools>
          {leftTools.map((body, i) => (
            <Tool key={i} width="42" height="42" viewBox="0 0 42 42">{body}</Tool>
          ))}
        </LeftTools>
        <ViewPanel>
          <ViewCell $active>
            <Tool width="42" height="42" viewBox="0 0 42 42">
              <path d="M3 13H29V41H3Z M3 13L16 2H41V29L29 41 M29 13L41 2" />
            </Tool>
          </ViewCell>
          <ViewCell>
            <Tool width="42" height="42" viewBox="0 0 42 42">
              <path d="M1 13L12 1H41L29 13H1Z" />
              <path d="M1 17H29L41 5M1 21H29L41 9M1 25H29L41 13M1 29H29L41 17M1 33H29L41 21M1 37H29L41 25M1 41H29L41 29" />
            </Tool>
          </ViewCell>
        </ViewPanel>
      </Canvas>
      <Sidebar>
        <SideMain>
          <SideContent>
            <SideModes>
              <ModeBtn $w={50}><Dot $color="#80e030" />Facile</ModeBtn>
              <ModeBtn $w={56}><Dot $color="#ffd000" />Avancé</ModeBtn>
              <ModeBtn $w={56} $active><Dot $color="#e00000" />Expert</ModeBtn>
            </SideModes>
            <PresetList>
              <PresetRow>
                <Combo $w={277}>
                  <BlueGear />
                  <Lock />
                  0.15mm OPTIMAL (modifié)
                  <ChevronBox><Chevron /></ChevronBox>
                </Combo>
                <BlueGear />
              </PresetRow>
              <PresetRow>
                <Combo $w={277}>
                  <Swatch />
                  <Lock />
                  Prusament PLA
                  <ChevronBox><Chevron /></ChevronBox>
                </Combo>
                <BlueGear />
              </PresetRow>
              <PresetRow>
                <Combo $w={277}>
                  <svg width="11" height="11" viewBox="0 0 11 11" fill="none">
                    <rect x="0.5" y="0.5" width="10" height="10" stroke="#666" />
                    <rect x="2" y="2" width="3" height="3" fill="#1a6fe0" />
                    <path d="M1 7.5H10" stroke="#888" />
                  </svg>
                  <Lock />
                  Original Prusa i3 MK2.5
                  <ChevronBox><Chevron /></ChevronBox>
                </Combo>
                <BlueGear />
              </PresetRow>
            </PresetList>
            <OptionsRow $h={18} $top={3}>
              <OptLabel $w={37}>Supports:</OptLabel>
              <Combo $w={240} $bg="#e1e1e1" $pad={3}>
                Partout
                <ChevronBox><Chevron /></ChevronBox>
              </Combo>
            </OptionsRow>
            <OptionsRow $h={17} $top={2}>
              <OptLabel $w={51}>Remplissage:</OptLabel>
              <Combo $w={58} $h={16} $pad={5}>
                20
                <ChevronBox><Chevron /></ChevronBox>
              </Combo>
              <OptLabel $w={33} $left={14}>Bordure:</OptLabel>
              <CheckBox />
            </OptionsRow>
            <ObjectList>
              <ListHead>
                <HeadCell $start>Nom</HeadCell>
                <HeadCell $line />
                <HeadCell $line>Édition</HeadCell>
              </ListHead>
              <ListRow>
                <HeadCell />
                <HeadCell><Eye /></HeadCell>
                <HeadCell><EditMark /></HeadCell>
              </ListRow>
            </ObjectList>
            <LegendLine $h={19}>
              <LegendText $w={107}>Informations sur l'Objet</LegendText>
            </LegendLine>
            <ObjectGrid>
              <div />
              <FileName>Bull_fixed.stl</FileName>
              <div />
              <Combo $w={116} $h={16} $pad={3} $left={3}>
                Coordonnées globales
                <ChevronBox><Chevron /></ChevronBox>
              </Combo>
              <AxisHead>X <BracketMark /></AxisHead>
              <AxisHead>Y <BracketMark /></AxisHead>
              <AxisHead>Z <BracketMark /></AxisHead>
              <div />
              {objectRows.map((row) => (
                <React.Fragment key={row.label}>
                  <GridLabel>{row.label}</GridLabel>
                  {row.values.map((v, i) => (
                    <NumBox key={i}>{v}</NumBox>
                  ))}
                  <UnitCell>
                    {row.unit}
                    {row.reset && (
                      <ResetIcon width="11" height="11" viewBox="0 0 11 11" fill="none" stroke="#2a7fd0" strokeWidth="1.4">
                        <path d="M3 2.5A4 4 0 1 1 1.5 6" />
                        <path d="M0.5 1L3.5 0.5L3.5 4" />
                      </ResetIcon>
                    )}
                  </UnitCell>
                </React.Fragment>
              ))}
            </ObjectGrid>
            <Rule $top={19} />
            <Rule $top={9} />
            <InfoGrid>
              <InfoLeft $right={10}>Taille: 98.80 x 39.80 x 47.67</InfoLeft>
              <span>Volume:</span>
              <span>283438.63</span>
              <InfoLeft $right={19}>Facettes: 158342 coques)</InfoLeft>
              <span>Matériaux:</span>
              <span>1</span>
            </InfoGrid>
            <Rule $top={14} />
            <LegendLine $h={18}>
              <LegendText $w={121}>Informations de découpage</LegendText>
            </LegendLine>
            <SliceGrid>
              {sliceRows.map(([label, value]) => (
                <React.Fragment key={label}>
                  <span>{label}</span>
                  <span>{value}</span>
                </React.Fragment>
              ))}
            </SliceGrid>
          </SideContent>
          <SideScroll>
            <ScrollCap><Chevron dir="up" /></ScrollCap>
            <ScrollThumb $h={459} />
            <BarGap />
            <ScrollCap><Chevron /></ScrollCap>
          </SideScroll>
        </SideMain>
        <ExportBtn>Exporter le G-Code</ExportBtn>
      </Sidebar>
    </Body>
    <StatusBar>
      Découpe annulée...
      <StatusDivider />
      <TaskEdge $left={0} $right={1134} />
      <TaskEdge $left={286} $right={0} />
    </StatusBar>
    <SettingsDialog />
  </AppWindow>
);

export default App;
